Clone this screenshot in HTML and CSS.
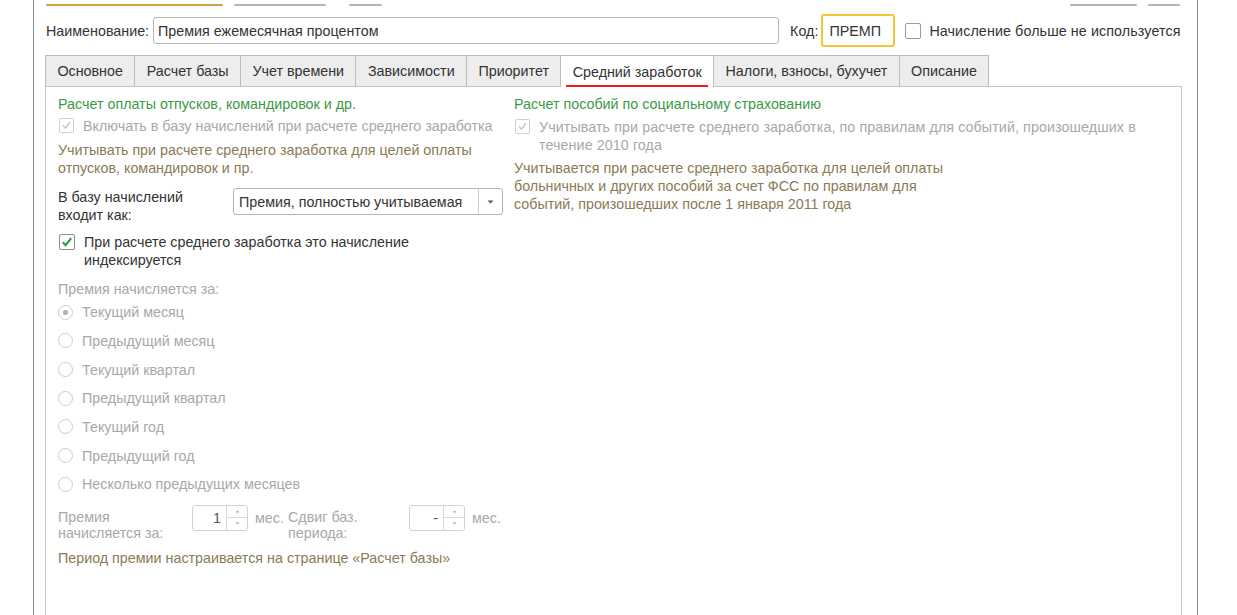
FILE: index.html
```html
<!DOCTYPE html>
<html lang="ru">
<head>
<meta charset="utf-8">
<title>Премия ежемесячная процентом</title>
<link rel="stylesheet" href="styles.css">
</head>
<body>
<div class="window">
  <div class="topbar">
    <span class="bar bar-gold b1"></span>
    <span class="bar b2"></span>
    <span class="bar b3"></span>
    <span class="bar b4"></span>
    <span class="bar b5"></span>
  </div>

  <div class="row1">
    <span class="lbl">Наименование:</span>
    <div class="input name-input">Премия ежемесячная процентом</div>
    <span class="lbl kod-lbl">Код:</span>
    <div class="input kod-input">ПРЕМП</div>
    <span class="cb cb-empty"></span>
    <span class="lbl cb-lbl">Начисление больше не используется</span>
  </div>

  <div class="tabs">
    <div class="tab">Основное</div>
    <div class="tab">Расчет базы</div>
    <div class="tab">Учет времени</div>
    <div class="tab">Зависимости</div>
    <div class="tab">Приоритет</div>
    <div class="tab active">Средний заработок</div>
    <div class="tab">Налоги, взносы, бухучет</div>
    <div class="tab">Описание</div>
  </div>

  <div class="panel">
    <div class="col left">
      <div class="group-title">Расчет оплаты отпусков, командировок и др.</div>
      <div class="check-row dis first-check">
        <span class="cb cb-dis"><svg viewBox="0 0 15 15" width="15" height="15"><path d="M3.5 7.5 L6.3 10.5 L11.5 3.8" fill="none" stroke="#c3c3c3" stroke-width="1.6"/></svg></span>
        <span class="cb-text">Включать в базу начислений при расчете среднего заработка</span>
      </div>
      <div class="note note1">Учитывать при расчете среднего заработка для целей оплаты<br>отпусков, командировок и пр.</div>

      <div class="combo-row">
        <div class="combo-lbl">В базу начислений<br>входит как:</div>
        <div class="combo">
          <span class="combo-val">Премия, полностью учитываемая</span>
          <span class="combo-btn"><svg viewBox="0 0 7 4" width="7" height="4"><path d="M0.5 0.5 H6.5 L3.5 3.5 Z" fill="#555"/></svg></span>
        </div>
      </div>

      <div class="check-row second-check">
        <span class="cb cb-on"><svg viewBox="0 0 16 16" width="16" height="16"><path d="M3.2 8.2 L6.4 11.6 L12.8 3.6" fill="none" stroke="#27a23a" stroke-width="2.4"/></svg></span>
        <span class="cb-text dark">При расчете среднего заработка это начисление<br>индексируется</span>
      </div>

      <div class="dis-lbl period-title">Премия начисляется за:</div>
      <div class="radios">
        <div class="radio-row"><span class="radio sel"></span>Текущий месяц</div>
        <div class="radio-row"><span class="radio"></span>Предыдущий месяц</div>
        <div class="radio-row"><span class="radio"></span>Текущий квартал</div>
        <div class="radio-row"><span class="radio"></span>Предыдущий квартал</div>
        <div class="radio-row"><span class="radio"></span>Текущий год</div>
        <div class="radio-row"><span class="radio"></span>Предыдущий год</div>
        <div class="radio-row"><span class="radio"></span>Несколько предыдущих месяцев</div>
      </div>

      <div class="spin-row">
        <div class="spin-lbl l1">Премия<br>начисляется за:</div>
        <div class="spin">
          <span class="spin-val">1</span>
          <span class="spin-btns">
            <span class="sb"><svg viewBox="0 0 5 3" width="5" height="3"><path d="M0.5 2.5 L2.5 0.5 L4.5 2.5 Z" fill="#aaa"/></svg></span>
            <span class="sb"><svg viewBox="0 0 5 3" width="5" height="3"><path d="M0.5 0.5 H4.5 L2.5 2.5 Z" fill="#aaa"/></svg></span>
          </span>
        </div>
        <span class="unit u1">мес.</span>
        <div class="spin-lbl l2">Сдвиг баз.<br>периода:</div>
        <div class="spin">
          <span class="spin-val">-</span>
          <span class="spin-btns">
            <span class="sb"><svg viewBox="0 0 5 3" width="5" height="3"><path d="M0.5 2.5 L2.5 0.5 L4.5 2.5 Z" fill="#aaa"/></svg></span>
            <span class="sb"><svg viewBox="0 0 5 3" width="5" height="3"><path d="M0.5 0.5 H4.5 L2.5 2.5 Z" fill="#aaa"/></svg></span>
          </span>
        </div>
        <span class="unit u2">мес.</span>
      </div>

      <div class="note final-note">Период премии настраивается на странице «Расчет базы»</div>
    </div>

    <div class="col right">
      <div class="group-title">Расчет пособий по социальному страхованию</div>
      <div class="check-row dis right-check">
        <span class="cb cb-dis"><svg viewBox="0 0 15 15" width="15" height="15"><path d="M3.5 7.5 L6.3 10.5 L11.5 3.8" fill="none" stroke="#c3c3c3" stroke-width="1.6"/></svg></span>
        <span class="cb-text">Учитывать при расчете среднего заработка, по правилам для событий, произошедших в<br>течение 2010 года</span>
      </div>
      <div class="note note2">Учитывается при расчете среднего заработка для целей оплаты<br>больничных и других пособий за счет ФСС по правилам для<br>событий, произошедших после 1 января 2011 года</div>
    </div>
  </div>
</div>
</body>
</html>
```

FILE: styles.css
```css
html, body {
  margin: 0;
  padding: 0;
  background: #ffffff;
  overflow: hidden;
}
body {
  font-family: "Liberation Sans", Arial, sans-serif;
  font-size: 14.3px;
  color: #333333;
}
.window {
  margin-left: 33px;
  width: 1163px;
  height: 615px;
  border-left: 1px solid #8c8c8c;
  border-right: 1px solid #8c8c8c;
  overflow: hidden;
}

/* top strip (bottoms of buttons above) */
.topbar {
  height: 14px;
  display: flex;
  align-items: flex-start;
  padding-top: 4px;
  box-sizing: border-box;
}
.bar {
  height: 2px;
  background: #b4b4b4;
  border-radius: 1px;
}
.bar-gold { background: #c9a648; }
.b1 { margin-left: 12px; width: 177px; }
.b2 { margin-left: 11px; width: 92px; }
.b3 { margin-left: 23px; width: 33px; }
.b4 { margin-left: auto; width: 67px; }
.b5 { margin-left: 11px; width: 32px; margin-right: 17px; }

/* first row */
.row1 {
  height: 33px;
  display: flex;
  align-items: center;
  padding-left: 12px;
}
.lbl { white-space: nowrap; }
.input {
  box-sizing: border-box;
  border: 1px solid #b5b5b5;
  border-radius: 3px;
  background: #fff;
  display: flex;
  align-items: center;
  padding-left: 4px;
  white-space: nowrap;
  color: #333;
}
.name-input {
  width: 626px;
  height: 27px;
  margin-left: 4px;
}
.kod-lbl { margin-left: 11px; }
.kod-input {
  width: 74px;
  height: 33px;
  margin-left: 3px;
  border: 2px solid #f5c537;
  padding-left: 6px;
}
.cb {
  box-sizing: border-box;
  width: 16px;
  height: 16px;
  border: 1px solid #9a9a9a;
  border-radius: 2px;
  background: #fff;
  display: flex;
  align-items: center;
  justify-content: center;
  flex: none;
}
.cb svg { display: block; }
.cb-empty { margin-left: 10px; }
.cb-lbl { margin-left: 8px; letter-spacing: 0.1px; }

/* tabs */
.tabs {
  display: flex;
  margin-top: 8px;
  margin-left: 11px;
  height: 31px;
  position: relative;
  z-index: 1;
}
.tab {
  box-sizing: border-box;
  height: 31px;
  display: flex;
  align-items: center;
  padding: 0 11.4px;
  background: #ededed;
  border: 1px solid #bcbcbc;
  border-bottom: none;
  border-left: none;
  white-space: nowrap;
  color: #333;
}
.tab:first-child { border-left: 1px solid #bcbcbc; }
.tab.active {
  background: #ffffff;
  height: 32px;
  margin-bottom: -1px;
  position: relative;
}
.tab.active::after {
  content: "";
  position: absolute;
  left: 5px;
  right: 5px;
  bottom: 0;
  height: 2px;
  background: #ee1c1c;
}

/* panel */
.panel {
  box-sizing: border-box;
  margin-left: 11px;
  width: 1137px;
  height: 560px;
  border: 1px solid #c4c4c4;
  border-bottom: none;
  padding: 8px 12px 0 12px;
  display: flex;
  gap: 11px;
}
.col.left { width: 445px; flex: none; }
.col.right { flex: 1; }

.group-title {
  line-height: 18px;
  color: #3a9a45;
  white-space: nowrap;
}
.check-row {
  display: flex;
  align-items: flex-start;
  line-height: 18px;
}
.check-row .cb { margin-top: 1px; margin-left: 1px; }
.cb-dis {
  width: 15px;
  height: 15px;
  border-color: #cfcfcf;
}
.cb-text {
  margin-left: 9px;
  color: #a8a8a8;
  white-space: nowrap;
}
.right-check .cb-text { letter-spacing: 0.08px; }
.cb-text.dark { color: #333; line-height: 18px; }
.first-check { margin-top: 4px; }
.right-check { margin-top: 5px; }

.note {
  color: #8b7a55;
  line-height: 18px;
  white-space: nowrap;
}
.note1 { margin-top: 6px; }
.note2 { margin-top: 5px; }

.combo-row {
  display: flex;
  align-items: flex-start;
  margin-top: 11px;
}
.combo-lbl {
  width: 175px;
  flex: none;
  line-height: 18px;
  color: #333;
}
.combo {
  box-sizing: border-box;
  width: 270px;
  height: 27px;
  border: 1px solid #b5b5b5;
  border-radius: 3px;
  display: flex;
  align-items: center;
}
.combo-val {
  flex: 1;
  padding-left: 5px;
  white-space: nowrap;
  color: #333;
}
.combo-btn {
  width: 23px;
  height: 100%;
  border-left: 1px solid #cfcfcf;
  display: flex;
  align-items: center;
  justify-content: center;
}
.combo-btn svg { display: block; }

.second-check { margin-top: 9px; }
.cb-on { border-color: #8e8e8e; }

.dis-lbl { color: #a8a8a8; line-height: 18px; }
.period-title { margin-top: 11px; }

.radios { display: flex; flex-direction: column; }
.radio-row {
  height: 28.67px;
  display: flex;
  align-items: center;
  color: #a8a8a8;
  white-space: nowrap;
}
.radio {
  box-sizing: border-box;
  width: 15px;
  height: 15px;
  border: 1px solid #cdcdcd;
  border-radius: 50%;
  margin-right: 9px;
  display: flex;
  align-items: center;
  justify-content: center;
}
.radio.sel::after {
  content: "";
  width: 5px;
  height: 5px;
  border-radius: 50%;
  background: #b0b0b0;
}

.spin-row {
  display: flex;
  align-items: flex-start;
  margin-top: 6px;
}
.spin-lbl {
  color: #a8a8a8;
  line-height: 16px;
  margin-top: 4px;
  white-space: nowrap;
}
.l1 { width: 134px; flex: none; }
.l2 { width: 121px; flex: none; }
.spin {
  box-sizing: border-box;
  width: 56px;
  height: 26px;
  border: 1px solid #d2d2d2;
  border-radius: 3px;
  display: flex;
  flex: none;
}
.spin-val {
  flex: 1;
  text-align: right;
  padding-right: 5px;
  line-height: 24px;
  color: #555;
}
.spin-btns {
  width: 20px;
  border-left: 1px solid #d8d8d8;
  display: flex;
  flex-direction: column;
}
.sb {
  flex: 1;
  display: flex;
  align-items: center;
  justify-content: center;
}
.sb:first-child { border-bottom: 1px solid #d8d8d8; }
.sb svg { display: block; }
.unit {
  color: #a8a8a8;
  line-height: 26px;
  flex: none;
}
.u1 { margin-left: 7px; width: 33px; }
.u2 { margin-left: 7px; }
.final-note { margin-top: 8px; }
```
